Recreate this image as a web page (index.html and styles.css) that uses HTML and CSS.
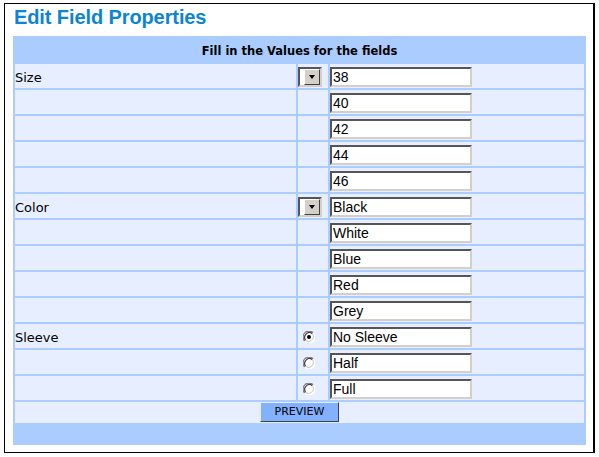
FILE: index.html
```html
<!DOCTYPE html>
<html>
<head>
<meta charset="utf-8">
<link rel="stylesheet" href="styles.css">
</head>
<body>
<div class="frame">
  <h1 class="title">Edit Field Properties</h1>
  <table class="props">
    <tr><td class="head" colspan="3">Fill in the Values for the fields</td></tr>
    <tr><td class="lbl">Size</td><td class="ctl"><span class="sel"><span class="btn"><span class="tri"></span></span></span></td><td class="val"><span class="inp">38</span></td></tr>
    <tr><td class="lbl"></td><td class="ctl"></td><td class="val"><span class="inp">40</span></td></tr>
    <tr><td class="lbl"></td><td class="ctl"></td><td class="val"><span class="inp">42</span></td></tr>
    <tr><td class="lbl"></td><td class="ctl"></td><td class="val"><span class="inp">44</span></td></tr>
    <tr><td class="lbl"></td><td class="ctl"></td><td class="val"><span class="inp">46</span></td></tr>
    <tr><td class="lbl">Color</td><td class="ctl"><span class="sel"><span class="btn"><span class="tri"></span></span></span></td><td class="val"><span class="inp">Black</span></td></tr>
    <tr><td class="lbl"></td><td class="ctl"></td><td class="val"><span class="inp">White</span></td></tr>
    <tr><td class="lbl"></td><td class="ctl"></td><td class="val"><span class="inp">Blue</span></td></tr>
    <tr><td class="lbl"></td><td class="ctl"></td><td class="val"><span class="inp">Red</span></td></tr>
    <tr><td class="lbl"></td><td class="ctl"></td><td class="val"><span class="inp">Grey</span></td></tr>
    <tr><td class="lbl">Sleeve</td><td class="ctl"><svg class="radio" width="12" height="12" viewBox="0 0 12 12"><circle cx="6" cy="6" r="5.5" fill="#ffffff"/><path d="M10.2 1.8A5.9 5.9 0 0 0 1.8 10.2" fill="none" stroke="#808080" stroke-width="1.2"/><path d="M9.3 2.7A4.7 4.7 0 0 0 2.7 9.3" fill="none" stroke="#404040" stroke-width="1.2"/><path d="M1.8 10.2A5.9 5.9 0 0 0 10.2 1.8" fill="none" stroke="#ffffff" stroke-width="1.2"/><path d="M2.7 9.3A4.7 4.7 0 0 0 9.3 2.7" fill="none" stroke="#d4d0c8" stroke-width="1.2"/><circle cx="6" cy="6" r="2" fill="#000000"/></svg></td><td class="val"><span class="inp">No Sleeve</span></td></tr>
    <tr><td class="lbl"></td><td class="ctl"><svg class="radio" width="12" height="12" viewBox="0 0 12 12"><circle cx="6" cy="6" r="5.5" fill="#ffffff"/><path d="M10.2 1.8A5.9 5.9 0 0 0 1.8 10.2" fill="none" stroke="#808080" stroke-width="1.2"/><path d="M9.3 2.7A4.7 4.7 0 0 0 2.7 9.3" fill="none" stroke="#404040" stroke-width="1.2"/><path d="M1.8 10.2A5.9 5.9 0 0 0 10.2 1.8" fill="none" stroke="#ffffff" stroke-width="1.2"/><path d="M2.7 9.3A4.7 4.7 0 0 0 9.3 2.7" fill="none" stroke="#d4d0c8" stroke-width="1.2"/></svg></td><td class="val"><span class="inp">Half</span></td></tr>
    <tr><td class="lbl"></td><td class="ctl"><svg class="radio" width="12" height="12" viewBox="0 0 12 12"><circle cx="6" cy="6" r="5.5" fill="#ffffff"/><path d="M10.2 1.8A5.9 5.9 0 0 0 1.8 10.2" fill="none" stroke="#808080" stroke-width="1.2"/><path d="M9.3 2.7A4.7 4.7 0 0 0 2.7 9.3" fill="none" stroke="#404040" stroke-width="1.2"/><path d="M1.8 10.2A5.9 5.9 0 0 0 10.2 1.8" fill="none" stroke="#ffffff" stroke-width="1.2"/><path d="M2.7 9.3A4.7 4.7 0 0 0 9.3 2.7" fill="none" stroke="#d4d0c8" stroke-width="1.2"/></svg></td><td class="val"><span class="inp">Full</span></td></tr>
    <tr><td class="actions" colspan="3"><span class="preview">PREVIEW</span></td></tr>
    <tr><td class="foot" colspan="3"></td></tr>
  </table>
</div>
</body>
</html>
```

FILE: styles.css
```css
html, body {
  margin: 0;
  padding: 0;
  background: #ffffff;
}
.frame {
  box-sizing: border-box;
  margin: 3px 0 0 4px;
  width: 591px;
  height: 450px;
  border: 1px solid #000000;
  border-right-width: 2px;
  padding: 2px 0 0 8px;
}
.title {
  margin: 0 0 7px 1px;
  height: 23px;
  font-family: "Liberation Sans", Arial, sans-serif;
  font-size: 20px;
  line-height: 23px;
  font-weight: bold;
  letter-spacing: -0.1px;
  color: #0b84d6;
}
.props {
  border-collapse: separate;
  border-spacing: 2px;
  background: #aaccff;
  width: 573px;
  font-family: "DejaVu Sans", Verdana, sans-serif;
  font-size: 13px;
  color: #000000;
}
.props td {
  padding: 0;
  height: 24px;
  vertical-align: middle;
  background: #e6eeff;
}
.props td.head {
  background: #aaccff;
  text-align: center;
  font-weight: bold;
  font-size: 11.5px;
  padding-top: 1px;
  box-sizing: border-box;
}
.props td.lbl {
  width: 281px;
  padding-top: 2px;
  box-sizing: border-box;
}
.props td.ctl {
  width: 30px;
}
.props td.val {
  width: 254px;
}
.inp {
  display: block;
  box-sizing: border-box;
  width: 142px;
  height: 20px;
  margin-top: 2px;
  border: 2px solid;
  border-color: #555555 #d4d0c8 #d4d0c8 #555555;
  background: #ffffff;
  font-family: "Liberation Sans", Arial, sans-serif;
  font-size: 14px;
  line-height: 16px;
  padding-left: 1px;
}
.sel {
  display: flex;
  justify-content: flex-end;
  align-items: center;
  box-sizing: border-box;
  width: 24px;
  height: 20px;
  margin-top: 2px;
  border: 2px solid;
  border-color: #555555 #d4d0c8 #d4d0c8 #555555;
  background: #ffffff;
}
.btn {
  display: flex;
  align-items: center;
  justify-content: center;
  box-sizing: border-box;
  width: 16px;
  height: 16px;
  background: #d4d0c8;
  border: 1px solid;
  border-color: #ffffff #404040 #404040 #ffffff;
}
.tri {
  width: 0;
  height: 0;
  border-left: 3.5px solid transparent;
  border-right: 3.5px solid transparent;
  border-top: 4px solid #000000;
}
.radio {
  display: block;
  margin: 1px 0 0 5px;
}
.props td.actions {
  height: 21px;
  text-align: center;
  vertical-align: top;
}
.preview {
  display: inline-block;
  box-sizing: border-box;
  width: 79px;
  height: 20px;
  background: #82b1ff;
  border: 1px solid;
  border-color: #e6eeff #404040 #404040 #e6eeff;
  font-family: "DejaVu Sans", Verdana, sans-serif;
  font-size: 11px;
  line-height: 18px;
  color: #000000;
}
.props td.foot {
  height: 18px;
  background: #aaccff;
}
```
